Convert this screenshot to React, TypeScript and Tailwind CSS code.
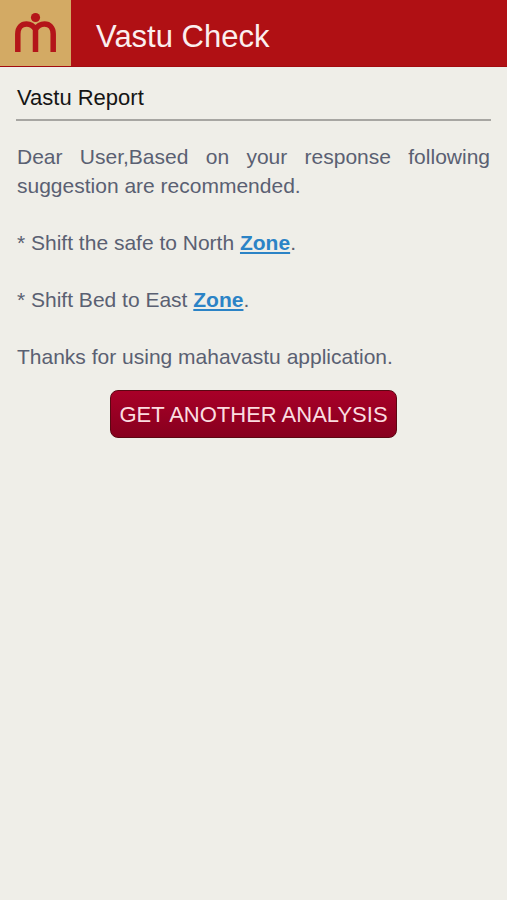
const suggestions = [
  { text: "Shift the safe to North", href: "#north-zone" },
  { text: "Shift Bed to East", href: "#east-zone" },
];

function Logo() {
  return (
    <svg viewBox="0 0 71 66" className="h-full w-full" aria-hidden="true">
      <circle cx="35.5" cy="17.5" r="4.6" fill="#b41519" />
      <path
        d="M17.8 52V34C17.8 27.5 21.5 24 26.5 24C30.5 24 33.5 26 35.5 29.5C37.5 26 40.5 24 44.5 24C49.5 24 53.2 27.5 53.2 34V52M35.5 28V52"
        fill="none"
        stroke="#b41519"
        strokeWidth="5.5"
      />
    </svg>
  );
}

function Header() {
  return (
    <header className="flex h-[67px] items-center border-b border-[#a30b10] bg-[#b01014]">
      <a href="#home" aria-label="Home" className="block h-full w-[71px] shrink-0 bg-[#d3aa64]">
        <Logo />
      </a>
      <h1 className="ml-[25px] pt-2 text-[31px] leading-10 text-[#fbeeee]">Vastu Check</h1>
    </header>
  );
}

export default function App() {
  return (
    <div className="min-h-screen bg-[#efeee8] font-['Liberation_Sans',Arial,sans-serif]">
      <Header />
      <main className="px-4">
        <h2 className="border-b-2 border-[#a7a6a2] pt-[17px] pb-[7px] pl-px text-[22px] leading-7 text-[#151515]">
          Vastu Report
        </h2>
        <div className="flex flex-col gap-7 px-px pt-[21px] text-[21px] leading-[29px] text-[#5a6072]">
          <p className="text-justify">
            Dear User,Based on your response following suggestion are recommended.
          </p>
          {suggestions.map((item) => (
            <p key={item.text}>
              * {item.text}{" "}
              <a href={item.href} className="font-bold text-[#2b83c6] underline">
                Zone
              </a>
              .
            </p>
          ))}
          <p>Thanks for using mahavastu application.</p>
        </div>
        <div className="flex justify-center pt-[19px]">
          <button
            type="button"
            className="h-12 rounded-lg border border-[#5c0712] bg-linear-to-b from-[#a90028] to-[#87001e] px-2 text-[22px] whitespace-nowrap text-[#fbdde0]"
          >
            GET ANOTHER ANALYSIS
          </button>
        </div>
      </main>
    </div>
  );
}
